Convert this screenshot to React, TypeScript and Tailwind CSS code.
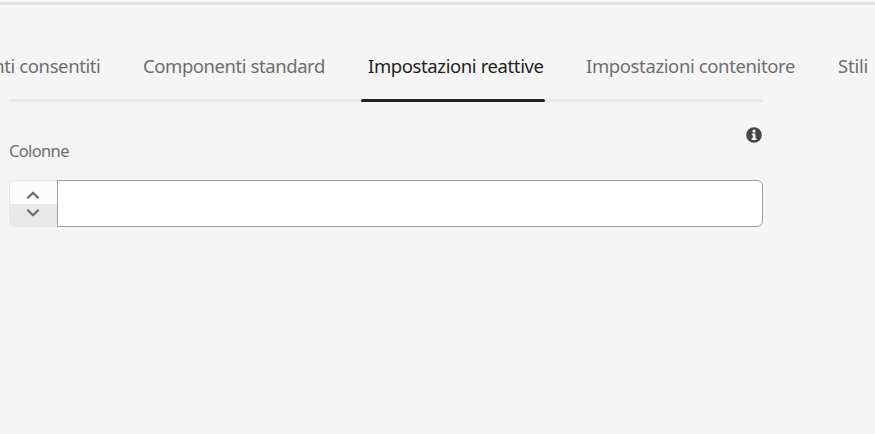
const tabs = [
  { label: "Componenti consentiti", style: "w-[100.5px] justify-end tracking-[-0.4px]" },
  { label: "Componenti standard", style: "ml-[42.5px] w-[182px] tracking-[-0.43px]" },
  { label: "Impostazioni reattive", style: "ml-[43px] w-[176px] tracking-[-0.39px] text-[#222222]" },
  { label: "Impostazioni contenitore", style: "ml-[42px] w-[210px] tracking-[-0.38px]" },
  { label: "Stili", style: "ml-[42px] w-[30px] tracking-[-0.2px]" },
];

function Chevron({ down = false }: { down?: boolean }) {
  return (
    <svg className="h-[8px] w-[14px]" viewBox="0 0 14 8" fill="none" stroke="#6e6e6e" strokeWidth="2.2" strokeLinecap="round" strokeLinejoin="round">
      <path d={down ? "M2 1.4 7 6.3 12 1.4" : "M2 6.6 7 1.7 12 6.6"} />
    </svg>
  );
}

function InfoIcon() {
  return (
    <svg className="mr-px h-4 w-4" viewBox="0 0 16 16">
      <circle cx="8" cy="8" r="7.8" fill="#464646" />
      <path d="M6.6 2.8h2.8v2.6H6.6zM5.8 6.5h3.6v4.7h1.1V13H5.6v-1.8h1.2V8.3h-1z" fill="#f5f5f5" />
    </svg>
  );
}

export default function App() {
  return (
    <main className="h-[434px] w-full overflow-hidden bg-[#f5f5f5] pt-[2px] font-['Noto_Sans',sans-serif] text-[#6e6e6e]">
      <div className="h-[3px] bg-[#e1e1e1]" />
      <nav className="flex h-[94px] pt-[46px] text-[18.5px] leading-[30px]">
        {tabs.map((t) => (
          <button key={t.label} className={`flex h-[30px] shrink-0 whitespace-nowrap ${t.style}`}>
            {t.label}
          </button>
        ))}
      </nav>
      <div className="ml-[9px] flex w-[754px] items-center">
        <div className="h-[3px] w-[352px] bg-[#e8e8e8]" />
        <div className="h-[3px] w-[184px] rounded-full bg-[#222222]" />
        <div className="h-[3px] flex-1 bg-[#e8e8e8]" />
      </div>
      <section className="ml-[9px] w-[754px] pt-[25px]">
        <div className="flex h-[53px] justify-between">
          <label htmlFor="columns" className="pt-[13px] text-[16.5px] leading-[22px] tracking-[-0.65px]">Colonne</label>
          <InfoIcon />
        </div>
        <div className="flex h-[47px]">
          <div className="flex w-[47.5px] flex-col overflow-hidden rounded-l-[6px] border border-r-0 border-[#e6e6e6]">
            <button className="flex h-[23px] items-center justify-center bg-[#fcfcfc] pt-[5px]"><Chevron /></button>
            <button className="flex flex-1 items-start justify-center bg-[#e9e9e9] pt-[5px]"><Chevron down /></button>
          </div>
          <input id="columns" className="w-[706.5px] rounded-r-[6px] border border-[#a0a0a0] bg-white px-3 outline-none" />
        </div>
      </section>
    </main>
  );
}
